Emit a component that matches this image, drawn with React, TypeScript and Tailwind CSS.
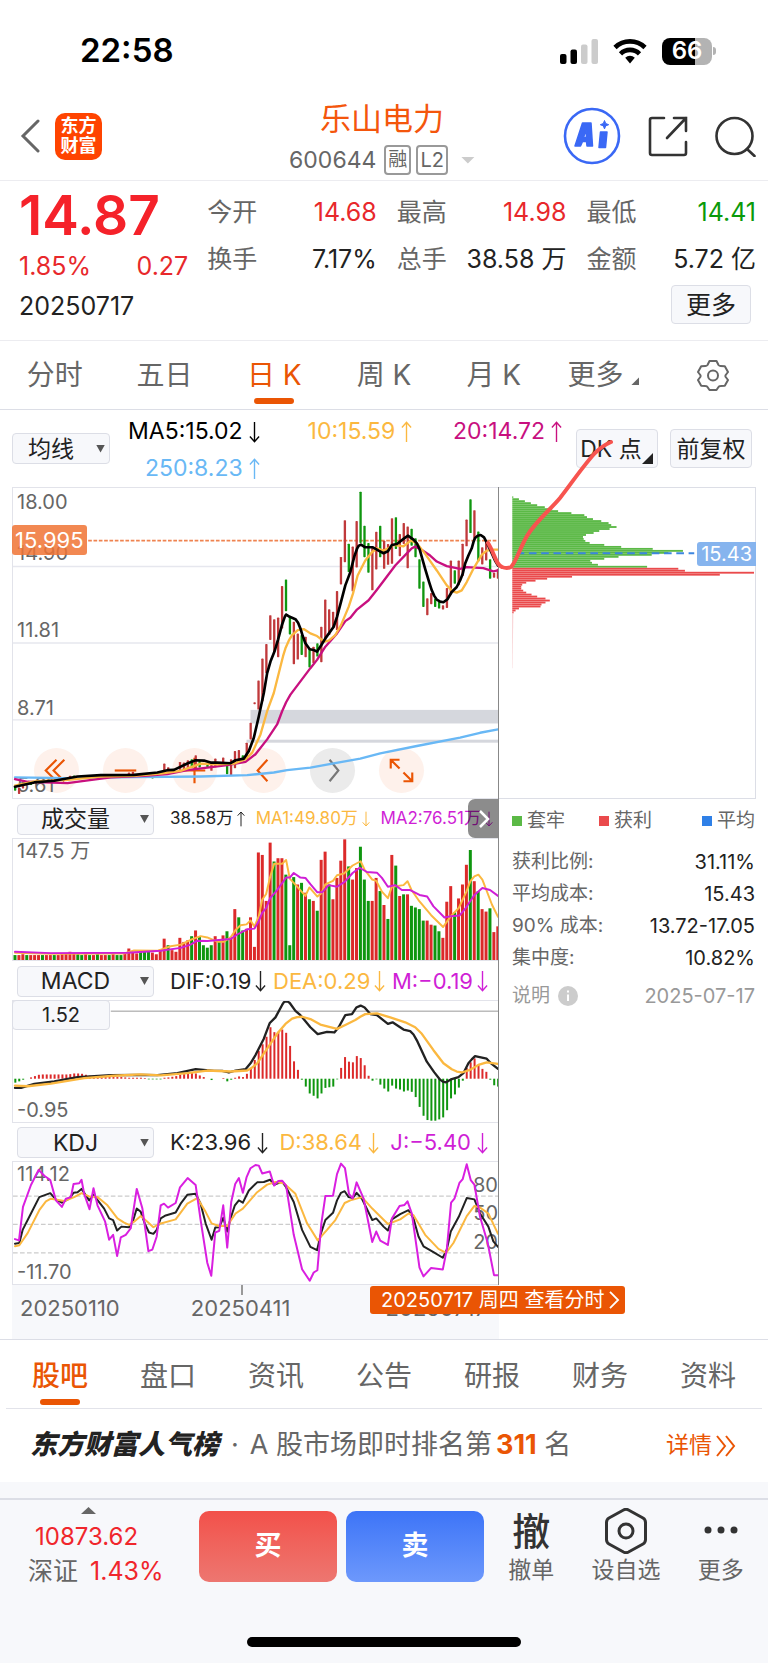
import { useState } from "react";
import type { ReactNode } from "react";

// signed volume in 万 per day: positive = up day, negative = down day
const VOLUMES = [
  -6, 6, 7, -6, 6, 6, 6, -6, 6, 6, -6, 6, 7, 8, 10, 8, -7, -6, 7, -6, 6, -7, 6, 6, -6, 7, -6, -6, 8, 14, 9, 8, -10, -11,
  -11, 9, 7, 13, 26, -18, 12, 10, 27, 22, 24, -29, 36, -28, -18, -15, -18, 29, -24, 30, -35, 28, 62, -52, -36, 38, 52,
  16, 131, 128, 72, 143, -120, 124, 124, -104, -18, -101, 92, -94, 82, -74, 72, -60, 122, 132, -92, 74, 100, 121, 147,
  -114, 98, 112, -138, -98, -72, 72, 100, -84, 67, -50, 128, -115, 78, -80, 80, -66, -64, -62, -48, 48, 43, -42, -35,
  27, 71, 90, -58, 75, 92, 116, -134, 96, -84, 62, 59, -63, 34, 41,
];

const MACD_BARS = [
  -12, -8, -3, 0, 4, 8, 12, 13, 13, 13, 13, 13, 13, 13, 14, 16, 16, 15, 12, 9, 7, 6, 5, 5, 5, 5, 5, 5, 4, 3, 3, 3, 3, 2,
  -2, -2, -2, -2, 3, 4, 6, 8, 12, 14, 16, 17, 16, 10, 5, 0, -4, 0, 0, 2, -8, -3, 3, 7, 5, 15, 30, 57, 85, 105, 128, 157,
  142, 143, 150, 140, 100, 53, 27, -3, -24, -45, -52, -60, -45, -28, -26, -24, -2, 33, 66, 52, 50, 69, 63, 41, 9, -6, -2,
  -18, -30, -39, -21, -30, -33, -39, -36, -40, -56, -86, -113, -126, -128, -128, -124, -118, -96, -60, -48, -27, -6, 33,
  50, 62, 42, 30, 21, -3, -20, -24,
];

// [day, high, low, up]
const CANDLES: [number, number, number, 0 | 1][] = [
  [0, 1160, 1175, 0], [1, 1165, 1185, 1], [2, 1155, 1168, 1], [4, 1148, 1158, 0], [14, 1130, 1138, 1], [15, 1129, 1138, 0],
  [29, 1120, 1130, 1], [30, 1118, 1128, 1], [35, 1128, 1138, 0], [38, 1093, 1122, 1], [39, 1104, 1118, 1], [42, 1088, 1112, 1],
  [43, 1090, 1110, 1], [44, 1083, 1108, 1], [45, 1080, 1106, 0], [46, 1068, 1110, 1], [47, 1085, 1105, 0], [49, 1090, 1106, 0],
  [50, 1094, 1115, 1], [51, 1078, 1104, 1], [53, 1075, 1100, 1], [54, 1088, 1125, 0], [55, 1080, 1130, 1], [56, 1055, 1107, 1],
  [57, 1052, 1090, 1], [58, 1068, 1084, 0], [59, 1030, 1080, 1], [60, 970, 1020, 1], [61, 908, 914, 1], [62, 842, 930, 1],
  [63, 776, 905, 1], [64, 732, 820, 1], [65, 645, 720, 1], [66, 657, 755, 1], [67, 652, 772, 1], [68, 557, 685, 1],
  [69, 537, 633, 0], [70, 650, 703, 0], [71, 665, 793, 1], [72, 700, 779, 1], [73, 705, 765, 0], [74, 710, 772, 1],
  [75, 745, 803, 0], [76, 740, 790, 1], [77, 730, 770, 0], [78, 680, 787, 1], [79, 598, 720, 1], [80, 627, 705, 1],
  [81, 635, 685, 1], [82, 572, 690, 1], [83, 469, 552, 1], [84, 358, 485, 1], [85, 429, 515, 0], [86, 438, 573, 1],
  [87, 361, 501, 1], [88, 272, 427, 0], [89, 375, 470, 0], [90, 427, 517, 0], [91, 440, 570, 1], [92, 393, 507, 1],
  [93, 375, 470, 0], [94, 420, 505, 1], [95, 430, 493, 1], [96, 352, 490, 1], [97, 349, 445, 0], [98, 400, 467, 1],
  [99, 367, 430, 1], [100, 377, 503, 1], [101, 384, 435, 0], [102, 413, 470, 0], [103, 476, 565, 0], [104, 543, 620, 0],
  [105, 594, 645, 1], [106, 578, 612, 1], [107, 595, 620, 0], [108, 603, 625, 0], [109, 615, 628, 1], [110, 563, 623, 1],
  [111, 480, 580, 1], [112, 509, 550, 0], [113, 480, 555, 1], [114, 429, 527, 1], [115, 356, 437, 1], [116, 295, 397, 0],
  [117, 328, 415, 1], [118, 392, 483, 0], [119, 440, 492, 1], [120, 425, 480, 1], [121, 476, 535, 0], [122, 517, 532, 1],
  [123, 505, 535, 1],
];

const MA5 =
  "42,1163 100,1150 160,1145 230,1132 300,1128 400,1127 470,1120 500,1113 520,1112 560,1093 585,1083 610,1084 630,1090 650,1090 690,1092 705,1083 730,1078 745,1055 760,1015 775,950 790,880 800,820 810,785 822,755 833,718 845,673 853,650 857,643 868,650 885,657 893,668 900,685 907,708 915,730 928,748 940,750 950,755 963,735 975,715 1000,680 1010,650 1022,605 1035,555 1050,515 1062,468 1070,445 1075,436 1082,432 1095,440 1118,440 1135,450 1150,458 1163,452 1175,433 1190,430 1215,411 1223,405 1240,417 1250,428 1258,445 1275,505 1287,545 1295,570 1302,586 1310,598 1320,604 1330,606 1342,597 1355,575 1370,560 1380,540 1388,520 1395,490 1405,465 1415,443 1420,425 1425,412 1433,405 1442,403 1452,410 1465,435 1485,480 1494,495";
const MA10 =
  "42,1160 100,1147 200,1142 300,1132 400,1130 480,1123 540,1115 600,1093 650,1095 700,1093 735,1080 755,1060 780,1005 800,935 820,880 840,800 848,768 855,745 865,722 875,705 892,690 910,687 930,700 950,708 972,725 985,722 1005,705 1022,675 1045,620 1058,580 1072,525 1095,480 1115,455 1130,443 1150,450 1170,440 1180,433 1210,437 1232,420 1250,428 1275,460 1310,510 1340,555 1358,573 1370,577 1385,570 1400,545 1420,505 1445,463 1460,450 1480,447 1494,447";
const MA20 =
  "42,1140 80,1148 130,1150 200,1152 250,1145 330,1135 430,1130 500,1125 560,1113 620,1105 680,1098 735,1088 765,1065 800,1020 830,975 845,935 857,908 870,885 930,805 950,780 975,740 1010,700 1035,663 1050,653 1070,628 1105,600 1130,568 1155,535 1185,495 1225,453 1235,443 1245,438 1265,448 1290,465 1310,483 1340,497 1380,505 1400,500 1450,503 1480,513 1494,510";
const MA250 =
  "42,1135 200,1137 400,1134 600,1132 740,1128 820,1120 860,1113 930,1105 1080,1078 1140,1062 1250,1040 1380,1015 1440,1000 1494,990";

const VOL_MA1 =
  "42,492 150,495 370,494 400,485 470,486 510,472 540,467 575,450 600,441 620,445 650,458 670,458 690,445 705,422 720,408 738,405 750,393 762,412 775,380 785,330 797,312 809,260 821,220 845,220 857,208 868,265 880,278 915,318 927,292 951,320 963,310 975,283 998,272 1010,255 1030,250 1057,225 1081,212 1093,238 1116,268 1128,272 1145,305 1163,325 1175,290 1210,285 1222,273 1234,300 1258,335 1293,377 1329,413 1352,380 1376,355 1399,305 1411,273 1423,258 1435,253 1447,268 1459,300 1476,345 1494,382";
const VOL_MA2 =
  "42,489 150,493 380,492 480,486 540,477 570,467 590,455 620,456 690,450 710,436 740,420 762,418 775,395 785,370 797,355 809,325 830,300 857,262 868,262 880,248 900,262 915,263 930,282 951,307 965,307 985,285 1010,290 1033,275 1057,248 1078,232 1100,245 1130,247 1145,263 1163,290 1185,285 1205,300 1230,300 1258,315 1281,320 1300,350 1333,384 1352,380 1378,378 1395,358 1423,315 1447,294 1470,300 1494,318";

const DIF =
  "42,895 60,895 100,883 160,875 230,862 330,856 420,855 470,856 530,850 585,838 640,843 665,843 685,848 705,842 735,838 750,820 765,795 790,745 808,697 825,680 845,642 850,634 856,631 862,632 868,636 885,660 900,673 930,710 952,731 980,724 1002,726 1015,710 1035,673 1055,670 1068,650 1081,644 1093,650 1110,670 1130,673 1163,700 1177,695 1210,717 1230,722 1240,732 1250,750 1280,815 1302,847 1320,870 1328,876 1338,878 1355,868 1375,862 1390,850 1405,820 1415,808 1425,798 1460,806 1475,822 1494,837";
const DEA =
  "42,888 80,890 150,882 250,865 340,858 420,854 480,857 560,850 620,842 690,845 740,842 755,833 770,820 800,775 830,730 855,700 875,684 890,679 905,678 930,685 960,702 1010,715 1035,703 1065,688 1080,678 1095,670 1130,668 1170,680 1215,695 1245,710 1265,730 1300,780 1330,820 1355,838 1370,845 1385,848 1410,840 1435,825 1460,817 1494,822";

const KDJ_K =
  "42,582 55,580 65,540 90,490 115,440 148,428 165,448 183,457 205,445 218,427 230,425 242,415 265,450 278,433 310,475 325,505 337,510 349,542 362,530 385,532 396,515 408,475 420,485 432,520 445,548 458,552 468,540 480,505 495,496 525,487 540,460 560,433 585,430 600,460 615,520 633,570 644,533 656,532 668,503 680,545 690,505 703,465 715,450 727,457 745,420 770,395 790,394 809,387 821,403 845,393 857,410 880,455 905,540 930,592 950,602 962,550 975,510 998,488 1010,450 1022,427 1033,422 1045,440 1057,443 1069,427 1085,445 1116,510 1128,505 1150,530 1163,542 1175,508 1200,492 1225,480 1240,505 1255,560 1270,590 1300,608 1328,625 1340,600 1352,545 1376,500 1400,443 1423,447 1440,490 1465,530 1480,575 1494,592";
const KDJ_D =
  "42,590 55,587 80,550 115,480 135,453 150,445 190,452 220,440 242,428 265,438 290,440 320,465 350,505 370,518 385,525 400,515 420,498 440,515 458,532 475,522 525,508 560,460 590,443 615,485 633,520 655,528 680,528 705,490 727,475 770,425 800,402 825,394 850,398 885,430 920,520 952,572 980,540 1005,510 1033,458 1050,450 1085,440 1116,475 1163,522 1200,508 1225,490 1240,495 1275,555 1315,598 1338,610 1360,580 1400,498 1423,467 1440,472 1465,490 1494,552";
const KDJ_J =
  "42,568 54,572 66,470 90,403 113,357 130,375 148,388 165,450 183,470 195,445 210,440 218,400 235,398 242,387 250,430 266,477 278,413 290,465 313,515 325,570 337,555 349,620 360,563 375,555 390,535 408,415 425,475 443,605 455,600 468,560 480,465 490,460 502,472 525,458 538,410 561,382 585,403 600,510 620,640 632,680 644,548 656,543 668,465 680,594 692,455 704,400 715,382 727,427 738,380 750,352 765,342 775,344 785,368 808,362 821,405 833,391 845,390 857,405 880,555 905,660 928,695 940,670 951,663 963,520 975,437 998,436 1010,370 1022,338 1034,352 1046,430 1057,444 1069,395 1090,445 1116,577 1128,545 1140,573 1163,586 1175,505 1198,467 1213,464 1222,453 1235,490 1258,655 1270,682 1293,656 1328,661 1340,600 1353,457 1363,445 1378,397 1388,385 1400,340 1412,388 1423,402 1440,500 1463,580 1482,678 1494,678";

// cost distribution, one entry per price step, top to bottom
const CHIPS_TRAPPED = [
  3, 20, 38, 56, 75, 98, 120, 138, 178, 217, 225, 243, 268, 290, 298, 314, 293, 262, 245, 222, 213, 215, 220, 233, 277,
  328, 423, 514, 470, 420, 320, 277, 235, 240, 258, 406,
];
const CHIPS_PROFIT = [
  500, 520, 728, 625, 180, 105, 70, 42, 30, 27, 27, 33, 42, 58, 75, 100, 113, 100, 88, 85, 20, 10, 4,
];

const dayX = (i: number) => 42 + i * 11.8;

const PERIODS = ["分时", "五日", "日 K", "周 K", "月 K", "更多"];
const SECTIONS = ["股吧", "盘口", "资讯", "公告", "研报", "财务", "资料"];

const QUOTES = [
  { label: "今开", value: "14.68", color: "text-[#e8282b]" },
  { label: "最高", value: "14.98", color: "text-[#e8282b]" },
  { label: "最低", value: "14.41", color: "text-[#0b9a0b]" },
  { label: "换手", value: "7.17%", color: "text-[#222]" },
  { label: "总手", value: "38.58 万", color: "text-[#222]" },
  { label: "金额", value: "5.72 亿", color: "text-[#222]" },
];

const COSTS = [
  ["获利比例:", "31.11%"],
  ["平均成本:", "15.43"],
  ["90% 成本:", "13.72-17.05"],
  ["集中度:", "10.82%"],
];

function Line({ points, color, width = 6 }: { points: string; color: string; width?: number }) {
  return (
    <polyline points={points} fill="none" stroke={color} strokeWidth={width} strokeLinejoin="round" strokeLinecap="round" />
  );
}

function Arrow({ up = false, small = false }: { up?: boolean; small?: boolean }) {
  return (
    <svg
      viewBox="0 0 12 24"
      className={`${small ? "h-4 w-2" : "h-[22px] w-[11px]"} shrink-0`}
      fill="none"
      stroke="currentColor"
      strokeWidth="1.5"
    >
      {up ? <path d="M6 23V2M1 7l5-5.5L11 7" /> : <path d="M6 1v21M1 17l5 5.5L11 17" />}
    </svg>
  );
}

function IndicatorSelect({ label, options, className }: { label: string; options: string[]; className: string }) {
  return (
    <div className={`relative shrink-0 ${className}`}>
      <select
        aria-label={label}
        className="block h-full w-full appearance-none rounded-[4px] border border-[#dcdee6] bg-[#f7f8fb] pr-5 text-center text-[23px] leading-7 text-[#222]"
      >
        {options.map((o) => (
          <option key={o}>{o}</option>
        ))}
      </select>
      <span className="pointer-events-none absolute top-1/2 right-[5px] h-2 w-[9px] -translate-y-1/2 bg-[#555] [clip-path:polygon(0_0,100%_0,50%_100%)]" />
    </div>
  );
}

function Pane({ viewBox, className, labels, children }: { viewBox: string; className: string; labels: ReactNode; children: ReactNode }) {
  return (
    <div className={`relative border-y border-l border-[#e2e3ea] text-[20px] leading-6 text-[#666] ${className}`}>
      {labels}
      <svg viewBox={viewBox} preserveAspectRatio="none" className="pointer-events-none absolute inset-0 h-full w-full">
        {children}
      </svg>
    </div>
  );
}

function StatusBar() {
  return (
    <div className="flex h-[102px] items-center justify-between pr-[52px] pl-20">
      <span className="text-[33px] font-semibold text-black">22:58</span>
      <div className="flex items-center gap-[15px]">
        <svg viewBox="0 0 38 25" className="h-[25px] w-[38px]">
          <rect x="0" y="15" width="6.5" height="10" rx="2" />
          <rect x="10.5" y="10.5" width="6.5" height="14.5" rx="2" />
          <rect x="21" y="5.5" width="6.5" height="19.5" rx="2" fill="#ccc" />
          <rect x="31.5" y="0" width="6.5" height="25" rx="2" fill="#ccc" />
        </svg>
        <svg viewBox="0 0 34 25" className="h-[25px] w-[34px]" fill="none" stroke="#000" strokeWidth="4.6">
          <path d="M2 8.5a21.5 21.5 0 0 1 30 0" />
          <path d="M7.5 14.8a13.5 13.5 0 0 1 19 0" />
          <path d="M12.2 18.7a7 7 0 0 1 9.6 0L17 24.6z" fill="#000" stroke="none" />
        </svg>
        <div className="flex items-center gap-px">
          <div className="flex h-[27px] w-[50px] items-center justify-center rounded-[8px] bg-linear-to-r from-black from-66% to-[#b3b3b3] to-66% text-[24px] leading-none font-semibold text-white">
            66
          </div>
          <span className="h-2 w-[3px] rounded-r-full bg-[#b3b3b3]" />
        </div>
      </div>
    </div>
  );
}

function Header() {
  return (
    <header className="grid h-[79px] grid-cols-[1fr_auto_1fr] items-center border-b border-[#ececf0] pr-3 pl-5">
      <div className="flex items-center gap-[15px] pb-[10px]">
        <button aria-label="返回">
          <svg viewBox="0 0 20 34" className="h-[34px] w-5" fill="none" stroke="#666" strokeWidth="3" strokeLinecap="round">
            <path d="M18 2 3 17l15 15" />
          </svg>
        </button>
        <div className="grid h-[47px] w-[47px] place-content-center rounded-[10px] bg-[#ff4400] text-center text-[18px] leading-5 font-bold text-white">
          <span>东方</span>
          <span>财富</span>
        </div>
      </div>
      <div className="flex flex-col items-center pr-3">
        <h1 className="pb-1 text-[31px] leading-[34px] text-[#f4560c]">乐山电力</h1>
        <div className="flex items-center gap-[5px] text-[23px] leading-10 text-[#666]">
          <span className="pr-[3px]">600644</span>
          <span className="rounded-[4px] border-2 border-[#999] px-[2px] text-[19px] leading-[26px]">融</span>
          <span className="rounded-[4px] border-2 border-[#999] px-[2px] text-[20px] leading-[26px]">L2</span>
          <span className="ml-2 h-[7px] w-[14px] bg-[#ccc] [clip-path:polygon(0_0,100%_0,50%_100%)]" />
        </div>
      </div>
      <div className="flex items-center justify-end gap-[27px] pb-[10px]">
        <button aria-label="Ai">
          <svg viewBox="0 0 58 58" className="h-[58px] w-[58px]">
            <circle cx="29" cy="29" r="27" fill="none" stroke="#3a68f5" strokeWidth="2.600" />
            <g fill="#3a68f5" stroke="#3a68f5" strokeWidth="1.5" strokeLinejoin="round">
              <path fillRule="evenodd" d="M19.500 16H28l1.500 23h-5.500l-.5-4.500h-4L17.500 39H12zM23 22.500l-2.500 8h3z" />
              <path d="M37.500 25h6.500l-1.500 15.500h-6.500z" />
              <path d="M41.500 13.500l1.200 3 3 1.200-3 1.200-1.200 3-1.200-3-3-1.200 3-1.200z" strokeWidth="1" />
            </g>
          </svg>
        </button>
        <button aria-label="分享">
          <svg viewBox="0 0 40 41" className="h-[41px] w-10" fill="none" stroke="#333" strokeWidth="2.6" strokeLinecap="round">
            <path d="M16 2H4a2 2 0 0 0-2 2v33a2 2 0 0 0 2 2h32a2 2 0 0 0 2-2V26M26 2h12v13M38 2 19 22" />
          </svg>
        </button>
        <button aria-label="搜索">
          <svg viewBox="0 0 41 41" className="h-[41px] w-[41px]" fill="none" stroke="#333" strokeWidth="2.6" strokeLinecap="round">
            <circle cx="19.5" cy="20" r="18" />
            <path d="M32 33l7.500 7" />
          </svg>
        </button>
      </div>
    </header>
  );
}

function QuotePanel() {
  return (
    <section className="grid h-[160px] grid-cols-[169fr_548fr] gap-x-[19px] border-b border-[#ececf0] pr-3 pl-[19px] text-[25px]">
      <div className="pt-1">
        <div className="text-[55px] leading-[60px] font-semibold text-[#f5222a]">14.87</div>
        <div className="flex justify-between leading-[42px] text-[#e8282b]">
          <span>1.85%</span>
          <span>0.27</span>
        </div>
        <div className="leading-[38px] text-[#222]">20250717</div>
      </div>
      <div className="pt-2">
        <dl className="grid grid-cols-3 gap-x-5 leading-[47px]">
          {QUOTES.map((q) => (
            <div key={q.label} className="flex justify-between whitespace-nowrap">
              <dt className="text-[#666]">{q.label}</dt>
              <dd className={q.color}>{q.value}</dd>
            </div>
          ))}
        </dl>
        <div className="flex justify-end pt-[2px] pr-[5px]">
          <button className="h-[39px] w-[80px] rounded-[4px] border border-[#dcdee6] bg-[#f7f8fb] leading-9 text-[#222]">更多</button>
        </div>
      </div>
    </section>
  );
}

function PeriodTabs() {
  const [active, setActive] = useState("日 K");
  return (
    <nav className="flex h-[69px] border-b border-[#dcdee6] text-[28px]">
      {PERIODS.map((p) => (
        <button
          key={p}
          onClick={() => setActive(p)}
          className={`relative flex-1 whitespace-nowrap ${active === p ? "text-[#ea5504]" : "text-[#666]"}`}
        >
          {p}
          {p === "更多" && <span className="ml-2 inline-block h-2 w-2 bg-[#666] [clip-path:polygon(100%_0,100%_100%,0_100%)]" />}
          {active === p && <span className="absolute bottom-[5px] left-1/2 h-[6px] w-10 -translate-x-1/2 rounded-full bg-[#ea5504]" />}
        </button>
      ))}
      <button aria-label="设置" className="flex flex-1 items-center justify-center">
        <svg viewBox="0 0 32 32" className="h-8 w-8" fill="none" stroke="#666" strokeWidth="2" strokeLinejoin="round">
          <path d="M12.5 2h7l2 4q.8 1 2 1l4.300.2 3.200 5.800-2.300 3q-.6 1 0 2l2.300 3-3.200 5.800-4.300.2q-1.200 0-2 1l-2 3h-7l-2-3q-.8-1-2-1l-4.300-.2L1 21l2.300-3q.6-1 0-2L1 13l3.200-5.800L8.500 7q1.200 0 2-1z" />
          <circle cx="16" cy="16.5" r="5" />
        </svg>
      </button>
    </nav>
  );
}

function AverageRow() {
  return (
    <div className="flex h-[77px] items-start pr-4 pl-3 text-[23px] leading-[37px]">
      <IndicatorSelect label="主图指标" options={["均线", "BOLL"]} className="mt-[23px] h-[31px] w-[98px]" />
      <div className="grid flex-1 grid-cols-[149fr_152fr_149fr] pt-[3px]">
        <span className="flex items-center justify-end gap-[6px] text-black">MA5:15.02<Arrow /></span>
        <span className="flex items-center justify-end gap-[6px] text-[#fbb840]">10:15.59<Arrow up /></span>
        <span className="flex items-center justify-end gap-[6px] text-[#c8107f]">20:14.72<Arrow up /></span>
        <span className="flex items-center justify-end gap-[6px] text-[#69b8f5]">250:8.23<Arrow up /></span>
      </div>
      <div className="flex gap-3 pt-[19px] pl-[14px] text-[#222]">
        <button className="relative h-[39px] w-[82px] rounded-[4px] border border-[#dcdee6] bg-[#f7f8fb] pr-3 leading-9 whitespace-nowrap">
          DK 点
          <span className="absolute right-1 bottom-[3px] h-[11px] w-[11px] bg-[#222] [clip-path:polygon(100%_0,100%_100%,0_100%)]" />
        </button>
        <button className="h-[39px] w-[82px] rounded-[4px] border border-[#dcdee6] bg-[#f7f8fb] leading-9 whitespace-nowrap">
          前复权
        </button>
      </div>
    </div>
  );
}

const CHART_TOOLS = [
  { name: "最早", path: "M23 12 12 23l11 11M31 12 20 23l11 11" },
  { name: "缩小", path: "M12 23h22" },
  { name: "放大", path: "M12 23h22M23 10v26" },
  { name: "左移", path: "M27 12 17 23l10 11" },
  { name: "右移", path: "M20 12l9 11-9 11" },
  { name: "全屏", path: "M12 21v-9h9M12 12l9 9M34 25v9h-9M34 34l-9-9" },
];

function CandlePane() {
  return (
    <Pane
      viewBox="36 261 1461 936"
      className="h-[312px]"
      labels={
        <>
          <div className="absolute bottom-[5px] left-[21px] flex gap-6">
            {CHART_TOOLS.map((t) => (
              <button
                key={t.name}
                aria-label={t.name}
                className={`h-[45px] w-[45px] rounded-full ${t.name === "右移" ? "bg-[#ebebeb] text-[#777]" : "bg-[#fef1eb] text-[#ea5504]"}`}
              >
                <svg viewBox="0 0 46 46" fill="none" stroke="currentColor" strokeWidth="2.2">
                  <path d={t.path} />
                </svg>
              </button>
            ))}
          </div>
          <span className="absolute top-[2px] left-1">18.00</span>
          <span className="absolute top-[53px] left-1">14.90</span>
          <span className="absolute top-[130px] left-1">11.81</span>
          <span className="absolute top-[208px] left-1">8.71</span>
          <span className="absolute top-[285px] left-1">5.61</span>
          <span className="absolute top-[37px] -left-px rounded-[3px] bg-[#f07334]/85 px-[3px] text-[22px] leading-[30px] text-white">
            15.995
          </span>
        </>
      }
    >
      <path d="M36 498H1497M36 729H1497M36 961H1497" stroke="#e6e7ee" strokeWidth="4" />
      <rect x="750" y="931" width="747" height="41" fill="#d5d7dd" />
      <rect x="738" y="1021" width="759" height="9" fill="#d5d7dd" />
      <path d="M262 420H1497" stroke="#ef8350" strokeWidth="5" strokeDasharray="11 5" />
      {CANDLES.map(([day, high, low, up]) => (
        <rect key={day} x={dayX(day) - 3} y={high} width="7" height={low - high} rx="2" fill={up ? "#c0393b" : "#0f960f"} />
      ))}
      <Line points={MA250} color="#69b8f5" width={7} />
      <Line points={MA20} color="#c8107f" width={7} />
      <Line points={MA10} color="#fbb840" width={7} />
      <Line points={MA5} color="#000" width={8} />
    </Pane>
  );
}

function VolumePane() {
  return (
    <>
      <div className="relative flex h-[39px] items-center pt-px pl-[5px]">
        <IndicatorSelect label="副图指标一" options={["成交量", "MACD", "KDJ"]} className="h-[31px] w-[137px]" />
        <div className="flex flex-1 items-center justify-between pr-[6px] pl-4 text-[17px] whitespace-nowrap">
          <span className="flex items-center gap-1 text-[#222]">38.58万<Arrow up small /></span>
          <span className="flex items-center gap-1 text-[#fbb840]">MA1:49.80万<Arrow small /></span>
          <span className="flex items-center gap-1 text-[#cf1fd6]">MA2:76.51万<Arrow small /></span>
        </div>
        <button
          aria-label="收起"
          className="absolute top-0 right-0 flex h-[39px] w-[31px] items-center justify-center rounded-l-[7px] bg-black/45 text-white"
        >
          <svg viewBox="0 0 12 20" className="h-5 w-3" fill="none" stroke="currentColor" strokeWidth="2.5">
            <path d="M2 2l8 8-8 8" />
          </svg>
        </button>
      </div>
      <Pane viewBox="36 144 1461 370" className="h-[123px]" labels={<span className="absolute top-0 left-1">147.5 万</span>}>
        {VOLUMES.map((v, i) => {
          const h = Math.abs(v) * 2.51;
          return <rect key={i} x={dayX(i) - 4.5} y={514 - h} width="9" height={h} fill={v > 0 ? "#dc2a2a" : "#0f960f"} />;
        })}
        <Line points={VOL_MA1} color="#fbb840" />
        <Line points={VOL_MA2} color="#cf1fd6" />
      </Pane>
    </>
  );
}

function MacdPane() {
  return (
    <>
      <div className="flex h-[39px] items-center pt-px pl-[5px]">
        <IndicatorSelect label="副图指标二" options={["MACD", "KDJ", "RSI"]} className="h-[31px] w-[137px]" />
        <div className="flex flex-1 items-center justify-between pr-[11px] pl-4 text-[22px] whitespace-nowrap">
          <span className="flex items-center gap-1 text-[#222]">DIF:0.19<Arrow /></span>
          <span className="flex items-center gap-1 text-[#fbb840]">DEA:0.29<Arrow /></span>
          <span className="flex items-center gap-1 text-[#cf1fd6]">M:−0.19<Arrow /></span>
        </div>
      </div>
      <Pane
        viewBox="36 630 1461 369"
        className="h-[123px]"
        labels={
          <>
            <span className="absolute -top-px -left-px h-[30px] w-[98px] rounded-[4px] border border-[#dcdee6] bg-[#f7f8fb] text-center leading-7 text-[#222]">
              1.52
            </span>
            <span className="absolute bottom-0 left-1">-0.95</span>
          </>
        }
      >
        <path d="M330 661H1497" stroke="#999" strokeWidth="3" />
        {MACD_BARS.map((v, i) => (
          <rect
            key={i}
            x={dayX(i) - 2}
            y={v > 0 ? 867 - v : 867}
            width="6"
            height={Math.abs(v)}
            fill={v > 0 ? "#dc2a2a" : "#0f960f"}
          />
        ))}
        <Line points={DIF} color="#222" width={7} />
        <Line points={DEA} color="#fbb840" width={7} />
      </Pane>
    </>
  );
}

function KdjPane() {
  return (
    <>
      <div className="flex h-[38px] items-center pt-px pl-[5px]">
        <IndicatorSelect label="副图指标三" options={["KDJ", "RSI", "BIAS"]} className="h-[31px] w-[137px]" />
        <div className="flex flex-1 items-center justify-between pr-[11px] pl-4 text-[22px] whitespace-nowrap">
          <span className="flex items-center gap-[6px] text-[#222]">K:23.96<Arrow /></span>
          <span className="flex items-center gap-[6px] text-[#fbb840]">D:38.64<Arrow /></span>
          <span className="flex items-center gap-[6px] text-[#cf1fd6]">J:−5.40<Arrow /></span>
        </div>
      </div>
      <Pane
        viewBox="36 333 1461 372"
        className="h-[124px]"
        labels={
          <>
            <span className="absolute top-0 left-1">114.12</span>
            <span className="absolute bottom-0 left-1">-11.70</span>
            <span className="absolute top-[11px] right-px">80</span>
            <span className="absolute top-[39px] right-px">50</span>
            <span className="absolute top-[68px] right-px">20</span>
          </>
        }
      >
        <path d="M36 437H1497M36 523H1497M36 610H1497" stroke="#ccc" strokeWidth="4" strokeDasharray="14 7" />
        <Line points={KDJ_K} color="#222" />
        <Line points={KDJ_D} color="#fbb840" />
        <Line points={KDJ_J} color="#d91fe0" />
      </Pane>
    </>
  );
}

function CostColumn() {
  return (
    <div>
      <div className="relative h-[312px] border-y border-r border-[#dcdee6]">
        <svg viewBox="357 261 771 936" preserveAspectRatio="none" className="absolute inset-0 h-full w-full">
          {CHIPS_TRAPPED.map((w, i) => (
            <rect key={i} x="397" y={286 + i * 6} width={w} height="5.6" fill="#5bb946" />
          ))}
          {CHIPS_PROFIT.map((w, i) => (
            <rect key={i} x="397" y={502 + i * 6} width={w} height="5.6" fill="#ea4a4c" />
          ))}
          <path d="M397 640h3l-2 165h-1z" fill="#f6c6c8" />
          <path d="M410 458H945" stroke="#3d86e0" strokeWidth="6" strokeDasharray="23 14" />
        </svg>
        <span className="absolute top-[54px] -right-px rounded-l-[3px] bg-[#86b4ee] px-1 text-[20px] leading-6 text-white">15.43</span>
      </div>
      <div className="pr-px pl-[13px] text-[19px] text-[#666]">
        <div className="flex justify-between pt-[6px] leading-8">
          <span className="flex items-center gap-[5px]"><i className="h-[10px] w-[10px] bg-[#5bb946]" />套牢</span>
          <span className="flex items-center gap-[5px]"><i className="h-[10px] w-[10px] bg-[#ea4a4c]" />获利</span>
          <span className="ml-4 flex items-center gap-[5px]"><i className="h-[10px] w-[10px] bg-[#2f80e7]" />平均</span>
        </div>
        <dl className="pt-[9px] leading-8">
          {COSTS.map(([label, value]) => (
            <div key={label} className="flex justify-between">
              <dt>{label}</dt>
              <dd className="text-[20px] text-[#222]">{value}</dd>
            </div>
          ))}
        </dl>
        <div className="flex items-center justify-between pt-[6px] leading-8 text-[#999]">
          <span className="flex items-center gap-2">
            说明
            <svg viewBox="0 0 20 20" className="h-5 w-5">
              <circle cx="10" cy="10" r="10" fill="#ccc" />
              <path d="M10 8.500v6.500M10 4.500v2" stroke="#fff" strokeWidth="2" />
            </svg>
          </span>
          <span className="text-[20px]">2025-07-17</span>
        </div>
      </div>
    </div>
  );
}

function DateAxis() {
  return (
    <div className="relative h-[54px] bg-[#f7f8fb] text-[22px] leading-[46px] text-[#666]">
      <span className="absolute left-[47%] h-[10px] w-[2px] bg-[#999]" />
      <div className="flex justify-between pr-3 pl-2">
        <span>20250110</span>
        <span className="pr-6">20250411</span>
        <span>20250717</span>
      </div>
      <button className="absolute top-px left-[358px] flex h-[28px] items-center gap-[5px] rounded-[3px] bg-[#ea5504] pr-[5px] pl-[11px] text-[20px] leading-7 whitespace-nowrap text-white">
        20250717 周四 查看分时
        <svg viewBox="0 0 12 20" className="h-[18px] w-[11px]" fill="none" stroke="currentColor" strokeWidth="2">
          <path d="M1 1l9 9-9 9" />
        </svg>
      </button>
    </div>
  );
}

function SectionTabs() {
  const [active, setActive] = useState("股吧");
  return (
    <nav className="mx-[6px] flex h-[69px] border-b border-[#e2e3ea] text-[28px]">
      {SECTIONS.map((s) => (
        <button
          key={s}
          onClick={() => setActive(s)}
          className={`relative flex-1 pt-[3px] ${active === s ? "font-medium text-[#ea5504]" : "text-[#666]"}`}
        >
          {s}
          {active === s && <span className="absolute bottom-[3px] left-1/2 h-[6px] w-10 -translate-x-1/2 rounded-full bg-[#ea5504]" />}
        </button>
      ))}
    </nav>
  );
}

function RankRow() {
  return (
    <div className="flex h-[73px] items-center pr-8 pl-[30px] text-[27px] whitespace-nowrap text-[#666]">
      <strong className="font-black text-[#222] italic">东方财富人气榜</strong>
      <span className="pr-[11px] pl-3">·</span>
      <span>
        A 股市场即时排名第<b className="ml-1 text-[#ea5504]">311</b> 名
      </span>
      <a href="#rank" className="ml-auto flex items-center gap-1 text-[23px] text-[#ea5504]">
        详情
        <svg viewBox="0 0 20 22" className="h-[22px] w-5" fill="none" stroke="currentColor" strokeWidth="2">
          <path d="M1 1l8 10-8 10M10 1l8 10-8 10" />
        </svg>
      </a>
    </div>
  );
}

function BottomBar() {
  return (
    <footer className="border-t-2 border-[#dcdee6] bg-[#f7f8fb] pb-4">
      <div className="flex h-[137px] items-start">
        <div className="flex flex-[199] flex-col pt-[7px] text-[25px] leading-[34px] text-[#f0262c]">
          <span className="ml-[81px] h-[7px] w-[15px] bg-[#666] [clip-path:polygon(50%_0,100%_100%,0_100%)]" />
          <span className="mt-[6px] pl-[35px] text-[24px]">10873.62</span>
          <span className="flex gap-3 pl-7"><span className="text-[#666]">深证</span>1.43%</span>
        </div>
        <div className="mt-[11px] flex h-[71px] flex-[285] gap-[9px] text-[27px] font-bold text-white">
          <button className="flex-1 rounded-[10px] bg-linear-to-b from-[#f2504a] to-[#ed7670]">买</button>
          <button className="flex-1 rounded-[10px] bg-linear-to-b from-[#3d74f7] to-[#6d98fc]">卖</button>
        </div>
        <div className="grid flex-[284] grid-cols-3 text-[23px] leading-8 text-[#666]">
          <button className="flex flex-col items-center pt-2">
            <span className="text-[38px] leading-[46px] font-medium text-[#333]">撤</span>
            撤单
          </button>
          <button className="flex flex-col items-center pt-2">
            <svg viewBox="0 0 44 46" className="h-[46px] w-11" fill="none" stroke="#333" strokeWidth="3">
              <path d="M19.500 2q2.500-1.300 5 0L39 10q2.500 1.500 2.500 4.500v17Q41.500 34.500 39 36l-14.500 8q-2.500 1.300-5 0L5 36q-2.500-1.500-2.500-4.500v-17Q2.500 11.500 5 10z" />
              <circle cx="22" cy="23" r="7" />
            </svg>
            设自选
          </button>
          <button className="flex flex-col items-center pt-2">
            <svg viewBox="0 0 34 46" className="h-[46px] w-[34px]" fill="#333">
              <circle cx="4" cy="22" r="3.5" />
              <circle cx="17" cy="22" r="3.5" />
              <circle cx="30" cy="22" r="3.5" />
            </svg>
            更多
          </button>
        </div>
      </div>
      <div className="mx-auto h-[10px] w-[274px] rounded-full bg-black" />
    </footer>
  );
}

export default function App() {
  return (
    <div className="min-h-screen w-full bg-white font-['Inter','Noto_Sans_CJK_SC',sans-serif] text-[#222]">
      <StatusBar />
      <Header />
      <QuotePanel />
      <PeriodTabs />

      <main className="relative border-b border-[#dcdee6]">
        <AverageRow />
        <div className="grid grid-cols-[487fr_257fr] px-3">
          <div className="min-w-0">
            <div className="relative">
              <CandlePane />
              <VolumePane />
              <MacdPane />
              <KdjPane />
              <span className="pointer-events-none absolute inset-y-0 right-0 w-px bg-[#888]" />
            </div>
            <DateAxis />
          </div>
          <CostColumn />
        </div>

        {/* hand-drawn trend stroke over the chart */}
        <svg viewBox="0 0 768 389" preserveAspectRatio="none" className="pointer-events-none absolute inset-x-0 top-0 h-[389px] w-full">
          <path
            d="M488 133C494 142 496 155 502 157Q507 159 511 157C516 152 520 138 527 126C536 111 550 100 560 88C571 74 583 56 595 43Q602 36 611 32"
            fill="none"
            stroke="#f7544f"
            strokeWidth="4"
            strokeLinecap="round"
          />
        </svg>
      </main>

      <SectionTabs />
      <RankRow />
      <div className="h-4 bg-[#f7f8fb]" />
      <BottomBar />
    </div>
  );
}
